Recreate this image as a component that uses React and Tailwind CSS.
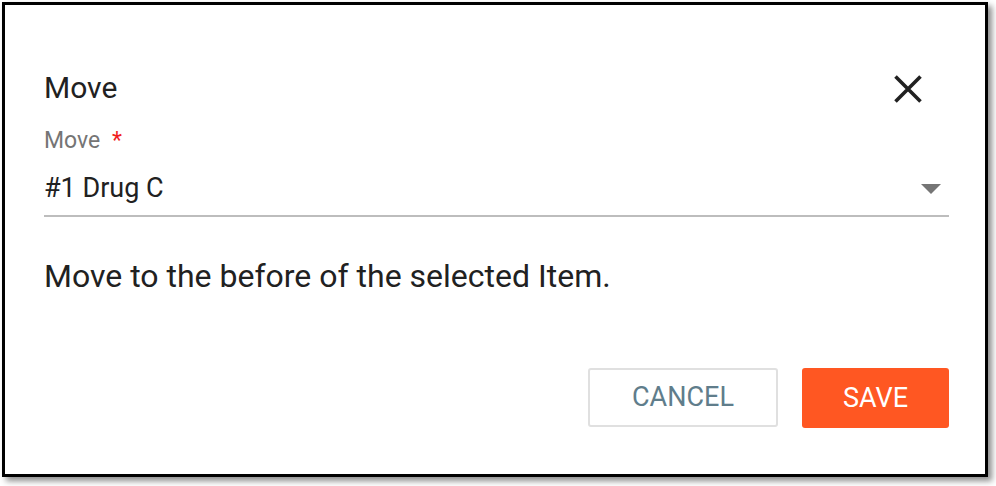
import React from "react";

// Boîte de dialogue "Move" : choix de l'élément avant lequel déplacer la ligne.
function CloseIcon() {
  return (
    <svg width="28" height="28" viewBox="0 0 28 28" className="block">
      <path d="M1.5 1.5 L26.5 26.5 M26.5 1.5 L1.5 26.5" stroke="#212121" strokeWidth="3.6" fill="none" />
    </svg>
  );
}

export default function App() {
  return (
    <div className="w-[996px] h-[486px] bg-white font-['Roboto',sans-serif] pt-[2px] pl-[2px]">
      <div className="w-[986px] h-[475px] border-[3px] border-black bg-white shadow-[4px_4px_6px_rgba(0,0,0,0.45)] pl-[39px] pr-[36px] pt-[65px] flex flex-col">
        <div className="flex items-center justify-between">
          <h2 className="text-[30px] leading-[36px] text-[#212121]">Move</h2>
          <button className="mr-[27px] mt-[1px]">
            <CloseIcon />
          </button>
        </div>

        <div className="mt-[21px] text-[23px] leading-[28px] text-[#757575]">
          Move <span className="ml-[6px] text-[#f01e1e]">*</span>
        </div>

        <div className="mt-[17px] flex items-center justify-between">
          <span className="text-[27px] leading-[32px] text-[#212121]">#1 Drug C</span>
          <svg width="20" height="10" viewBox="0 0 20 10" className="mr-[8px] mt-[2px]">
            <path d="M0 0 L20 0 L10 10 Z" fill="#757575" />
          </svg>
        </div>
        <div className="mt-[11px] h-[2px] bg-[#bdbdbd]" />

        <p className="mt-[40px] text-[32px] leading-[38px] text-[#212121]">
          Move to the before of the selected Item.
        </p>

        <div className="mt-[73px] flex justify-end gap-[24px]">
          <button className="w-[190px] h-[59px] border-2 border-[#e0e0e0] rounded-[3px] text-[27px] text-[#607d8b] bg-white">
            CANCEL
          </button>
          <button className="w-[147px] h-[60px] rounded-[3px] bg-[#ff5722] text-[27px] text-white">
            SAVE
          </button>
        </div>
      </div>
    </div>
  );
}
